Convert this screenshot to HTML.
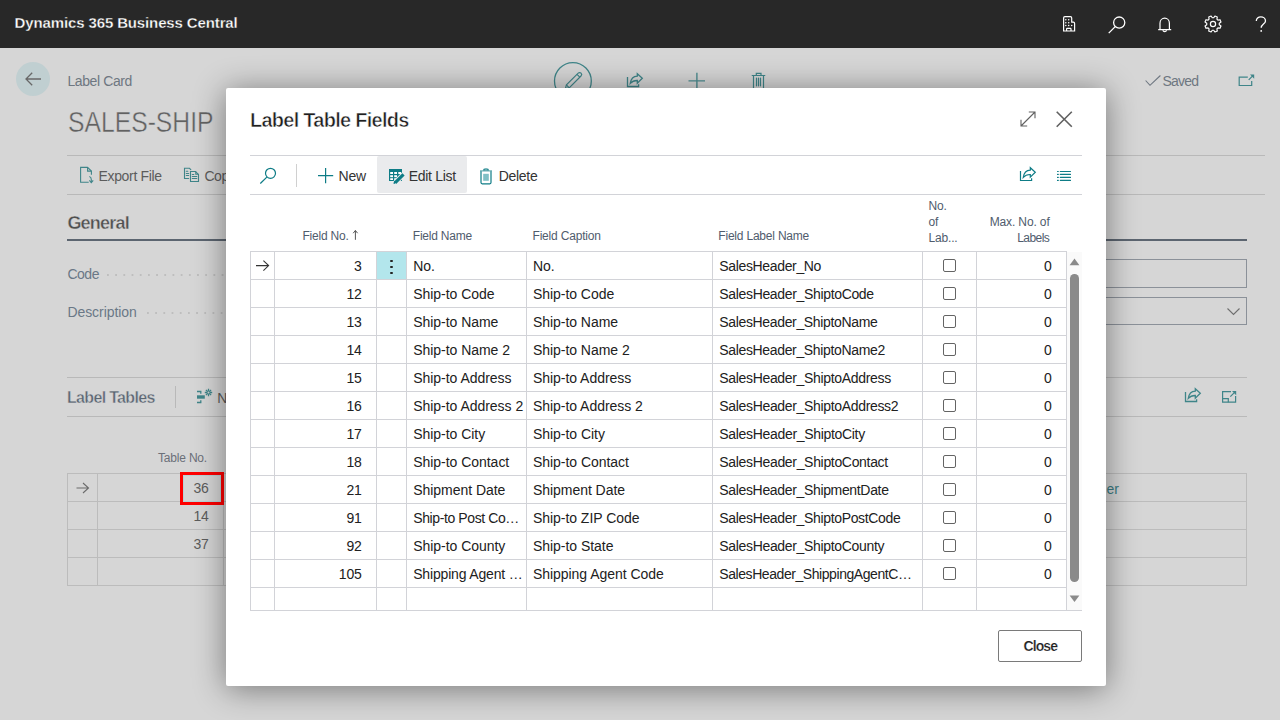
<!DOCTYPE html>
<html><head><meta charset="utf-8">
<style>
*{margin:0;padding:0;box-sizing:border-box}
html,body{width:1280px;height:720px;overflow:hidden;background:#d6d6d6;font-family:"Liberation Sans",sans-serif}
.a{position:absolute}
.t{position:absolute;white-space:nowrap;line-height:1}
svg{position:absolute;overflow:visible}
.hl{position:absolute;height:1px;background:#b9b9b9}
.ml{position:absolute;height:1px;background:#d2d3d8}
.vl{position:absolute;width:1px;background:#d2d3d8}
.cb{position:absolute;width:13px;height:13px;border:1px solid #646464;border-radius:2px}
</style></head><body>
<div class="a" style="left:0;top:0;width:1280px;height:48px;background:#282828"></div>

<svg style="left:1058px;top:12px" width="22" height="24" viewBox="0 0 22 24"><g fill="none" stroke="#fff" stroke-width="1.2"><path d="M5.6 19V5.9Q5.6 4.6 6.9 4.6H12.4Q13.7 4.6 13.7 5.9V10.1H15.4Q16.6 10.1 16.6 11.4V19Z"/><path d="M8.6 19V17Q8.6 16.4 9.2 16.4H12.4Q13 16.4 13 17V19"/></g><g fill="#fff"><circle cx="7.8" cy="7.8" r="0.75"/><circle cx="10.7" cy="7.8" r="0.75"/><circle cx="7.8" cy="10.7" r="0.75"/><circle cx="10.7" cy="10.7" r="0.75"/><circle cx="7.8" cy="13.5" r="0.75"/><circle cx="10.7" cy="13.5" r="0.75"/><circle cx="13.7" cy="13.5" r="0.75"/></g></svg>
<svg style="left:1108px;top:16px" width="18" height="18" viewBox="0 0 18 18"><g fill="none" stroke="#fff" stroke-width="1.3"><circle cx="11.2" cy="6.6" r="5.6"/><path d="M7.2 10.6L0.7 17.1"/></g></svg>
<svg style="left:1157px;top:16.7px" width="16" height="16" viewBox="0 0 16 16"><g fill="none" stroke="#fff" stroke-width="1.2"><path d="M3 12.6V6.2C3 3.4 5.1 1.2 7.7 1.2S12.4 3.4 12.4 6.2V12.6H14.2H1.2H3"/><path d="M5.8 13.2A2 2 0 0 0 9.6 13.2"/></g></svg>
<svg style="left:1203px;top:14px" width="20" height="20" viewBox="0 0 20 20"><g fill="none" stroke="#fff" stroke-width="1.2" stroke-linejoin="round"><path d="M16.26 10.71 L17.97 11.91 L16.99 14.28 L14.93 13.92 L13.92 14.93 L14.28 16.99 L11.91 17.97 L10.71 16.26 L9.29 16.26 L8.09 17.97 L5.72 16.99 L6.08 14.93 L5.07 13.92 L3.01 14.28 L2.03 11.91 L3.74 10.71 L3.74 9.29 L2.03 8.09 L3.01 5.72 L5.07 6.08 L6.08 5.07 L5.72 3.01 L8.09 2.03 L9.29 3.74 L10.71 3.74 L11.91 2.03 L14.28 3.01 L13.92 5.07 L14.93 6.08 L16.99 5.72 L17.97 8.09 L16.26 9.29Z"/><circle cx="10" cy="10" r="2.6"/></g></svg>
<svg style="left:1254.5px;top:16px" width="13" height="18" viewBox="0 0 13 18"><g fill="none" stroke="#fff" stroke-width="1.3"><path d="M1.3 5C1.3 2.6 3.3 0.9 5.8 0.9S10.5 2.6 10.5 4.9C10.5 8 6.2 8.2 6.2 11.8"/></g><circle cx="6.2" cy="14.9" r="0.9" fill="#fff"/></svg>

<!-- background page -->
<div class="hl" style="left:67px;top:155px;width:1198px"></div>
<div class="hl" style="left:67px;top:194px;width:1198px"></div>
<div class="a" style="left:67px;top:239px;width:1180px;height:2px;background:#5c6570"></div>
<div class="a" style="left:700px;top:259px;width:547px;height:29px;border:1px solid #8b9199"></div>
<div class="a" style="left:700px;top:297px;width:547px;height:28px;border:1px solid #8b9199"></div>
<div class="a" style="left:107px;top:273.5px;width:120px;height:2px;background-image:radial-gradient(circle at 1px 1px,#bebebe 0.85px,transparent 1.1px);background-size:8.2px 2px"></div>
<div class="a" style="left:147px;top:311.5px;width:80px;height:2px;background-image:radial-gradient(circle at 1px 1px,#bebebe 0.85px,transparent 1.1px);background-size:8.2px 2px"></div>
<div class="hl" style="left:67px;top:377px;width:1180px"></div>
<div class="hl" style="left:67px;top:416px;width:1180px"></div>
<div class="a" style="left:175px;top:386px;width:1px;height:22px;background:#b9b9b9"></div>
<div class="a" style="left:67px;top:473px;width:1180px;height:113px;border:1px solid #bcbcbc"></div>
<div class="hl" style="left:67px;top:501px;width:1180px;background:#bcbcbc"></div>
<div class="hl" style="left:67px;top:529px;width:1180px;background:#bcbcbc"></div>
<div class="hl" style="left:67px;top:557px;width:1180px;background:#bcbcbc"></div>
<div class="a" style="left:97px;top:473px;width:1px;height:113px;background:#bcbcbc"></div>
<div class="a" style="left:223px;top:473px;width:1px;height:113px;background:#bcbcbc"></div>
<div class="a" style="left:183px;top:475px;width:38px;height:27px;border:1px solid #b9d3d6"></div>
<svg style="left:76px;top:482px" width="14" height="12" viewBox="0 0 14 12"><path d="M0.5 6H12.5M7 1L12.5 6L7 11" fill="none" stroke="#6b6b6b" stroke-width="1.1"/></svg>

<div class="a" style="left:16px;top:62px;width:34px;height:34px;border-radius:50%;background:#c0cfd1"></div>
<svg style="left:25px;top:72px" width="16" height="14" viewBox="0 0 16 14"><path d="M1 7H16M7.2 0.8L1 7L7.2 13.2" fill="none" stroke="#686868" stroke-width="1.3"/></svg>
<svg style="left:554px;top:61px" width="40" height="40" viewBox="0 0 40 40"><circle cx="18.9" cy="20" r="18.4" fill="none" stroke="#3f8589" stroke-width="1.3"/><g fill="none" stroke="#3f8589" stroke-width="1.2" stroke-linejoin="round"><path d="M27 15L15.2 26.8L11.4 27.7L12.4 23.9L24.2 12.1A2 2 0 0 1 27 15Z"/><path d="M23 13.3L25.8 16.1M12.4 23.9L15.2 26.8"/></g></svg>
<svg style="left:623px;top:68px" width="24" height="24" viewBox="0 0 24 24"><g fill="none" stroke="#3f8589" stroke-width="1.3" stroke-linejoin="miter"><path d="M4.5 9V18.5H15.6V16.3"/><path d="M7.3 15.3C7.9 11 10.6 8.3 14.3 8.1V5.7L19.3 10.3L14.3 15.1V12.5C11.6 12.4 9.2 13.2 7.3 15.3Z"/></g></svg>
<svg style="left:688px;top:72px" width="17" height="18" viewBox="0 0 17 18"><path d="M8.9 0.8V18M0.5 8.9H17" fill="none" stroke="#3f8589" stroke-width="1.4" opacity=".9"/></svg>
<svg style="left:744px;top:64px" width="28" height="28" viewBox="0 0 28 28"><g fill="none" stroke="#3f8589" stroke-width="1.2" stroke-linecap="round"><path d="M8.2 11.5H20.8M12.3 11.3V9.3H17V11.3M9.5 11.7V27M19.5 11.7V27M12.5 14V21.8M14.5 14V21.8M16.5 14V21.8"/></g></svg>
<svg style="left:1145px;top:75px" width="16" height="11" viewBox="0 0 16 11"><path d="M0.6 5.5L5 10.3L15.4 0.5" fill="none" stroke="#6e7781" stroke-width="1.1"/></svg>
<svg style="left:1238px;top:73px" width="18" height="14" viewBox="0 0 18 14"><g fill="none" stroke="#3f8589" stroke-width="1.2"><path d="M9.8 4.1H1.2V12.5H13.7V8.1"/><path d="M10.7 6.9L15.2 2.4"/></g><path d="M12 1.5H16.2V5.7Z" fill="#3f8589"/></svg>
<svg style="left:76px;top:164px" width="24" height="24" viewBox="0 0 24 24"><g fill="none" stroke="#3f8589" stroke-width="1.1"><path d="M12.7 18.3H4.6V3.4H11.5L15.4 7.1V10.8"/><path d="M11.6 3.6V7.1H15.2"/><path d="M13.3 12.5Q15.3 13 15.3 15.5V18.3"/><path d="M13.4 16.3L15.3 18.6L17.2 16.3"/></g></svg>
<svg style="left:180px;top:164px" width="24" height="24" viewBox="0 0 24 24"><g fill="none" stroke="#3f8589" stroke-width="1.1" stroke-linecap="round"><path d="M8.7 14.5H4.5V4.3H9.5L10.8 5.6"/><path d="M6.3 7.3H7.8M6.3 9.5H8.7M6.3 11.5H8.7"/><path d="M10.5 7.5H15.5L18.5 10.5V17.5H10.5Z"/><path d="M15.8 7.8V10.2H18.2"/><path d="M12.3 10.5H13.8M12.3 12.5H16.8M12.3 14.5H16.8"/></g></svg>
<svg style="left:192px;top:384px" width="24" height="24" viewBox="0 0 24 24"><g fill="none" stroke="#3f8589" stroke-width="1.3"><path d="M5 7.5H8.8V9.8M8.8 16.2V18.5H5"/><path d="M12.8 8.5H20.2M16.5 4.8V12.2M13.9 5.9L19.1 11.1M19.1 5.9L13.9 11.1"/></g><rect x="5" y="11.3" width="7.8" height="3.4" fill="#3f8589"/><circle cx="16.5" cy="8.5" r="1" fill="#d0d0d0"/></svg>
<svg style="left:1227px;top:304px" width="14" height="14" viewBox="0 0 14 14"><path d="M0.5 4.5L6.5 10.5L12.5 4.5" fill="none" stroke="#6e6e6e" stroke-width="1.1"/></svg>
<svg style="left:1181px;top:383px" width="24" height="24" viewBox="0 0 24 24"><g fill="none" stroke="#3f8589" stroke-width="1.3" stroke-linejoin="miter"><path d="M4.5 9V18.5H15.6V16.3"/><path d="M7.3 15.3C7.9 11 10.6 8.3 14.3 8.1V5.7L19.3 10.3L14.3 15.1V12.5C11.6 12.4 9.2 13.2 7.3 15.3Z"/></g></svg>
<svg style="left:1216px;top:384px" width="24" height="24" viewBox="0 0 24 24"><g fill="none" stroke="#3f8589" stroke-width="1.2"><path d="M15 7.6H6.6V18.2H19.6V12"/><path d="M6.6 14.6H12.3V18.2"/><path d="M14.3 12.6L18.6 8.3"/></g><path d="M16 7H20.2V11.2Z" fill="#3f8589"/></svg>

<div class="t" style="top:15.00px;font-size:15px;color:#ffffff;font-weight:700;letter-spacing:-0.130px;left:14.60px;-webkit-text-stroke:0.3px #282828;">Dynamics 365 Business Central</div>
<div class="t" style="top:74.05px;font-size:14px;color:#6e7781;letter-spacing:-0.390px;left:67.40px;">Label Card</div>
<div class="t" style="top:106.83px;font-size:29.5px;color:#626262;left:68.20px;transform:scaleX(0.8372);transform-origin:0 0;-webkit-text-stroke:0.45px #d6d6d6;">SALES-SHIP</div>
<div class="t" style="top:168.75px;font-size:14px;color:#5c5c5c;letter-spacing:-0.334px;left:98.50px;">Export File</div>
<div class="t" style="top:168.75px;font-size:14px;color:#5c5c5c;letter-spacing:-0.449px;left:204.40px;">Copy</div>
<div class="t" style="top:213.56px;font-size:18px;color:#505050;font-weight:700;letter-spacing:-0.778px;left:67.40px;-webkit-text-stroke:0.4px #d6d6d6;">General</div>
<div class="t" style="top:266.95px;font-size:14px;color:#6a7886;letter-spacing:-0.467px;left:67.40px;">Code</div>
<div class="t" style="top:304.85px;font-size:14px;color:#6a7886;letter-spacing:-0.057px;left:67.40px;">Description</div>
<div class="t" style="top:390.26px;font-size:16px;color:#5b6673;font-weight:700;letter-spacing:-0.678px;left:67.00px;-webkit-text-stroke:0.4px #d6d6d6;">Label Tables</div>
<div class="t" style="top:391.15px;font-size:14px;color:#5c5c5c;letter-spacing:-0.187px;left:217.30px;">New</div>
<div class="t" style="top:451.54px;font-size:12px;color:#6b7079;letter-spacing:-0.189px;left:158.00px;">Table No.</div>
<div class="t" style="top:481.15px;font-size:14px;color:#5c5c5c;letter-spacing:-0.312px;right:1071.56px;">36</div>
<div class="t" style="top:509.15px;font-size:14px;color:#5c5c5c;letter-spacing:-0.312px;right:1071.56px;">14</div>
<div class="t" style="top:537.15px;font-size:14px;color:#5c5c5c;letter-spacing:-0.312px;right:1071.56px;">37</div>
<div class="t" style="top:481.65px;font-size:14px;color:#3b7c83;letter-spacing:0.073px;right:161.03px;">er</div>
<div class="t" style="top:74.15px;font-size:14px;color:#6e7781;letter-spacing:-0.781px;left:1162.50px;">Saved</div>
<div class="a" style="left:180px;top:472px;width:44px;height:33px;border:3px solid #ff0000"></div>
<!-- modal -->
<div class="a" style="left:226px;top:88px;width:880px;height:598px;background:#fff;border-radius:2px;box-shadow:0 3px 32px rgba(0,0,0,.45)"></div>
<div class="ml" style="left:250px;top:155px;width:832px"></div>
<div class="ml" style="left:250px;top:194px;width:832px"></div>
<div class="a" style="left:377px;top:156px;width:90px;height:37px;background:#eaebed;border-radius:2px"></div>
<div class="vl" style="left:296px;top:164px;height:23px;background:#d0d0d0"></div>
<div class="a" style="left:250px;top:251px;width:817px;height:360px;border:1px solid #d2d3d8;border-right:none"></div>
<div class="ml" style="left:250px;top:279px;width:816px"></div>
<div class="ml" style="left:250px;top:307px;width:816px"></div>
<div class="ml" style="left:250px;top:335px;width:816px"></div>
<div class="ml" style="left:250px;top:363px;width:816px"></div>
<div class="ml" style="left:250px;top:391px;width:816px"></div>
<div class="ml" style="left:250px;top:419px;width:816px"></div>
<div class="ml" style="left:250px;top:447px;width:816px"></div>
<div class="ml" style="left:250px;top:475px;width:816px"></div>
<div class="ml" style="left:250px;top:503px;width:816px"></div>
<div class="ml" style="left:250px;top:531px;width:816px"></div>
<div class="ml" style="left:250px;top:559px;width:816px"></div>
<div class="ml" style="left:250px;top:587px;width:816px"></div>
<div class="vl" style="left:274px;top:251px;height:359px"></div>
<div class="vl" style="left:376px;top:251px;height:359px"></div>
<div class="vl" style="left:406px;top:251px;height:359px"></div>
<div class="vl" style="left:526px;top:251px;height:359px"></div>
<div class="vl" style="left:712px;top:251px;height:359px"></div>
<div class="vl" style="left:922px;top:251px;height:359px"></div>
<div class="vl" style="left:976px;top:251px;height:359px"></div>
<div class="vl" style="left:1066px;top:251px;height:359px"></div>
<div class="a" style="left:1067px;top:252px;width:15px;height:358px;background:#fafafa"></div>
<div class="ml" style="left:1066px;top:610px;width:16px"></div>
<div class="a" style="left:377px;top:252px;width:29px;height:27px;background:#b3e6ec"></div>
<div class="cb" style="left:943px;top:259px"></div>
<div class="cb" style="left:943px;top:287px"></div>
<div class="cb" style="left:943px;top:315px"></div>
<div class="cb" style="left:943px;top:343px"></div>
<div class="cb" style="left:943px;top:371px"></div>
<div class="cb" style="left:943px;top:399px"></div>
<div class="cb" style="left:943px;top:427px"></div>
<div class="cb" style="left:943px;top:455px"></div>
<div class="cb" style="left:943px;top:483px"></div>
<div class="cb" style="left:943px;top:511px"></div>
<div class="cb" style="left:943px;top:539px"></div>
<div class="cb" style="left:943px;top:567px"></div>

<svg style="left:1020px;top:111px" width="16" height="16" viewBox="0 0 16 16"><g fill="none" stroke="#616161" stroke-width="1.1"><path d="M1 15L15 1M8.8 1H15V7.2M1 8.8V15H7.2"/></g></svg>
<svg style="left:1056px;top:111px" width="17" height="17" viewBox="0 0 17 17"><path d="M0.7 0.7L15.8 15.8M15.8 0.7L0.7 15.8" fill="none" stroke="#616161" stroke-width="1.6"/></svg>
<svg style="left:256px;top:164px" width="26" height="24" viewBox="0 0 26 24"><g fill="none" stroke="#0e7c86" stroke-width="1.2"><circle cx="14.5" cy="9.3" r="5.0"/><path d="M10.8 13.1L4.3 19.5"/></g></svg>
<svg style="left:318px;top:168px" width="16" height="16" viewBox="0 0 16 16"><path d="M7.6 0V15.2M0 7.6H15.2" fill="none" stroke="#0e7c86" stroke-width="1.2"/></svg>
<svg style="left:384px;top:164px" width="26" height="24" viewBox="0 0 26 24"><path d="M5 5H18V17H5Z" fill="#0e7c86"/><g fill="#fff"><rect x="6.2" y="8" width="2.8" height="2"/><rect x="10.2" y="8" width="2.8" height="2"/><rect x="14.3" y="8" width="2.7" height="2"/><rect x="6.2" y="11.2" width="2.8" height="2"/><rect x="10.2" y="11.2" width="2.8" height="2"/><rect x="6.2" y="14.2" width="2.8" height="1.8"/><rect x="10.2" y="14.2" width="2.8" height="1.8"/></g><path d="M11.5 18.3L19.8 10" stroke="#eaebed" stroke-width="5.2"/><path d="M11 18.8L19.5 10.3" stroke="#0e7c86" stroke-width="3.2"/><path d="M10 19.8L11.2 17" stroke="#0e7c86" stroke-width="1.5"/></svg>
<svg style="left:476px;top:164px" width="22" height="24" viewBox="0 0 22 24"><path d="M5 7.2V18.6Q5 19.8 6.2 19.8H13.8Q15 19.8 15 18.6V7.2" fill="none" stroke="#0e7c86" stroke-width="1.2"/><path d="M4 6.9H16" stroke="#0e7c86" stroke-width="1.1" opacity=".7"/><path d="M7 6.6Q7 4.2 10 4.2Q13 4.2 13 6.6Z" fill="#0e7c86" opacity=".85"/><path d="M10 4.5V6.5" stroke="#9cc9cc" stroke-width="0.9"/><rect x="7.2" y="9.8" width="5.6" height="7" fill="#7fbfc5"/></svg>
<svg style="left:1016px;top:162px" width="24" height="24" viewBox="0 0 24 24"><g fill="none" stroke="#0e7c86" stroke-width="1.2" stroke-linejoin="miter"><path d="M4.5 9V18.5H15.6V16.3"/><path d="M7.3 15.3C7.9 11 10.6 8.3 14.3 8.1V5.7L19.3 10.3L14.3 15.1V12.5C11.6 12.4 9.2 13.2 7.3 15.3Z"/></g></svg>
<svg style="left:1056px;top:170px" width="16" height="12" viewBox="0 0 16 12"><g stroke="#0e7c86" stroke-width="1.1" stroke-linecap="round"><path d="M1.5 1.5H2.3M4.3 1.5H14.5M1.5 4.4H2.3M4.3 4.4H14.5M1.5 7.4H2.3M4.3 7.4H14.5M1.5 10.4H2.3M4.3 10.4H14.5"/></g></svg>
<svg style="left:352px;top:229px" width="8" height="12" viewBox="0 0 8 12"><path d="M3.4 1.5V10.8M1.2 4.2L3.4 1.5L5.6 4.2" fill="none" stroke="#555" stroke-width="1"/></svg>
<svg style="left:256px;top:260px" width="14" height="12" viewBox="0 0 14 12"><path d="M0 5.6H12.8M7.4 0.6L12.6 5.6L7.4 10.6" fill="none" stroke="#333" stroke-width="1.1"/></svg>
<div class="a" style="left:390.3px;top:259.8px;width:2.4px;height:2.4px;border-radius:50%;background:#222"></div>
<div class="a" style="left:390.3px;top:265.7px;width:2.4px;height:2.4px;border-radius:50%;background:#222"></div>
<div class="a" style="left:390.3px;top:271.6px;width:2.4px;height:2.4px;border-radius:50%;background:#222"></div>
<svg style="left:1069px;top:258px" width="11" height="8" viewBox="0 0 11 8"><path d="M5.5 0.6L10.4 7.2H0.6Z" fill="#8a8a8a"/></svg>
<svg style="left:1069px;top:595px" width="11" height="8" viewBox="0 0 11 8"><path d="M5.5 7L10.4 0.6H0.6Z" fill="#8a8a8a"/></svg>
<div class="a" style="left:1070.3px;top:273.5px;width:8.7px;height:308.5px;border-radius:4.4px;background:#8a8a8a"></div>

<div class="t" style="top:110.07px;font-size:20px;color:#1f1f1f;font-weight:700;letter-spacing:-0.739px;left:250.00px;-webkit-text-stroke:0.55px #fff;">Label Table Fields</div>
<div class="t" style="top:169.15px;font-size:14px;color:#333333;letter-spacing:-0.172px;left:338.50px;">New</div>
<div class="t" style="top:168.85px;font-size:14px;color:#333333;letter-spacing:-0.301px;left:408.70px;">Edit List</div>
<div class="t" style="top:169.15px;font-size:14px;color:#333333;letter-spacing:-0.295px;left:498.70px;">Delete</div>
<div class="t" style="top:229.64px;font-size:12px;color:#505c6d;letter-spacing:-0.226px;right:931.53px;">Field No.</div>
<div class="t" style="top:229.54px;font-size:12px;color:#505c6d;letter-spacing:-0.215px;left:412.80px;">Field Name</div>
<div class="t" style="top:229.54px;font-size:12px;color:#505c6d;letter-spacing:-0.190px;left:532.50px;">Field Caption</div>
<div class="t" style="top:229.74px;font-size:12px;color:#505c6d;letter-spacing:-0.204px;left:718.30px;">Field Label Name</div>
<div class="t" style="top:199.59px;font-size:12px;color:#505c6d;letter-spacing:-0.218px;left:928.50px;">No.</div>
<div class="t" style="top:215.54px;font-size:12px;color:#505c6d;letter-spacing:-0.175px;left:928.50px;">of</div>
<div class="t" style="top:231.74px;font-size:12px;color:#505c6d;letter-spacing:-0.175px;left:928.50px;">Lab...</div>
<div class="t" style="top:215.54px;font-size:12px;color:#505c6d;letter-spacing:-0.124px;right:230.37px;">Max. No. of</div>
<div class="t" style="top:231.74px;font-size:12px;color:#505c6d;letter-spacing:-0.562px;right:230.81px;">Labels</div>
<div class="t" style="top:258.65px;font-size:14px;color:#212121;letter-spacing:-0.234px;right:918.48px;">3</div>
<div class="t" style="top:258.65px;font-size:14px;color:#212121;letter-spacing:-0.036px;left:413.20px;">No.</div>
<div class="t" style="top:258.65px;font-size:14px;color:#212121;letter-spacing:-0.036px;left:532.90px;">No.</div>
<div class="t" style="top:258.65px;font-size:14px;color:#212121;letter-spacing:-0.350px;left:719.30px;">SalesHeader_No</div>
<div class="t" style="top:258.65px;font-size:14px;color:#212121;letter-spacing:-0.234px;right:228.33px;">0</div>
<div class="t" style="top:286.65px;font-size:14px;color:#212121;letter-spacing:-0.234px;right:918.48px;">12</div>
<div class="t" style="top:286.65px;font-size:14px;color:#212121;letter-spacing:-0.034px;left:413.20px;">Ship-to Code</div>
<div class="t" style="top:286.65px;font-size:14px;color:#212121;letter-spacing:-0.034px;left:532.90px;">Ship-to Code</div>
<div class="t" style="top:286.65px;font-size:14px;color:#212121;letter-spacing:-0.338px;left:719.30px;">SalesHeader_ShiptoCode</div>
<div class="t" style="top:286.65px;font-size:14px;color:#212121;letter-spacing:-0.234px;right:228.33px;">0</div>
<div class="t" style="top:314.65px;font-size:14px;color:#212121;letter-spacing:-0.234px;right:918.48px;">13</div>
<div class="t" style="top:314.65px;font-size:14px;color:#212121;letter-spacing:-0.036px;left:413.20px;">Ship-to Name</div>
<div class="t" style="top:314.65px;font-size:14px;color:#212121;letter-spacing:-0.036px;left:532.90px;">Ship-to Name</div>
<div class="t" style="top:314.65px;font-size:14px;color:#212121;letter-spacing:-0.347px;left:719.30px;">SalesHeader_ShiptoName</div>
<div class="t" style="top:314.65px;font-size:14px;color:#212121;letter-spacing:-0.234px;right:228.33px;">0</div>
<div class="t" style="top:342.65px;font-size:14px;color:#212121;letter-spacing:-0.234px;right:918.48px;">14</div>
<div class="t" style="top:342.65px;font-size:14px;color:#212121;letter-spacing:-0.035px;left:413.20px;">Ship-to Name 2</div>
<div class="t" style="top:342.65px;font-size:14px;color:#212121;letter-spacing:-0.035px;left:532.90px;">Ship-to Name 2</div>
<div class="t" style="top:342.65px;font-size:14px;color:#212121;letter-spacing:-0.347px;left:719.30px;">SalesHeader_ShiptoName2</div>
<div class="t" style="top:342.65px;font-size:14px;color:#212121;letter-spacing:-0.234px;right:228.33px;">0</div>
<div class="t" style="top:370.65px;font-size:14px;color:#212121;letter-spacing:-0.234px;right:918.48px;">15</div>
<div class="t" style="top:370.65px;font-size:14px;color:#212121;letter-spacing:-0.033px;left:413.20px;">Ship-to Address</div>
<div class="t" style="top:370.65px;font-size:14px;color:#212121;letter-spacing:-0.033px;left:532.90px;">Ship-to Address</div>
<div class="t" style="top:370.65px;font-size:14px;color:#212121;letter-spacing:-0.331px;left:719.30px;">SalesHeader_ShiptoAddress</div>
<div class="t" style="top:370.65px;font-size:14px;color:#212121;letter-spacing:-0.234px;right:228.33px;">0</div>
<div class="t" style="top:398.65px;font-size:14px;color:#212121;letter-spacing:-0.234px;right:918.48px;">16</div>
<div class="t" style="top:398.65px;font-size:14px;color:#212121;letter-spacing:-0.033px;left:413.20px;">Ship-to Address 2</div>
<div class="t" style="top:398.65px;font-size:14px;color:#212121;letter-spacing:-0.033px;left:532.90px;">Ship-to Address 2</div>
<div class="t" style="top:398.65px;font-size:14px;color:#212121;letter-spacing:-0.332px;left:719.30px;">SalesHeader_ShiptoAddress2</div>
<div class="t" style="top:398.65px;font-size:14px;color:#212121;letter-spacing:-0.234px;right:228.33px;">0</div>
<div class="t" style="top:426.65px;font-size:14px;color:#212121;letter-spacing:-0.234px;right:918.48px;">17</div>
<div class="t" style="top:426.65px;font-size:14px;color:#212121;letter-spacing:-0.030px;left:413.20px;">Ship-to City</div>
<div class="t" style="top:426.65px;font-size:14px;color:#212121;letter-spacing:-0.030px;left:532.90px;">Ship-to City</div>
<div class="t" style="top:426.65px;font-size:14px;color:#212121;letter-spacing:-0.319px;left:719.30px;">SalesHeader_ShiptoCity</div>
<div class="t" style="top:426.65px;font-size:14px;color:#212121;letter-spacing:-0.234px;right:228.33px;">0</div>
<div class="t" style="top:454.65px;font-size:14px;color:#212121;letter-spacing:-0.234px;right:918.48px;">18</div>
<div class="t" style="top:454.65px;font-size:14px;color:#212121;letter-spacing:-0.032px;left:413.20px;">Ship-to Contact</div>
<div class="t" style="top:454.65px;font-size:14px;color:#212121;letter-spacing:-0.032px;left:532.90px;">Ship-to Contact</div>
<div class="t" style="top:454.65px;font-size:14px;color:#212121;letter-spacing:-0.325px;left:719.30px;">SalesHeader_ShiptoContact</div>
<div class="t" style="top:454.65px;font-size:14px;color:#212121;letter-spacing:-0.234px;right:228.33px;">0</div>
<div class="t" style="top:482.65px;font-size:14px;color:#212121;letter-spacing:-0.234px;right:918.48px;">21</div>
<div class="t" style="top:482.65px;font-size:14px;color:#212121;letter-spacing:-0.036px;left:413.20px;">Shipment Date</div>
<div class="t" style="top:482.65px;font-size:14px;color:#212121;letter-spacing:-0.036px;left:532.90px;">Shipment Date</div>
<div class="t" style="top:482.65px;font-size:14px;color:#212121;letter-spacing:-0.340px;left:719.30px;">SalesHeader_ShipmentDate</div>
<div class="t" style="top:482.65px;font-size:14px;color:#212121;letter-spacing:-0.234px;right:228.33px;">0</div>
<div class="t" style="top:510.65px;font-size:14px;color:#212121;letter-spacing:-0.234px;right:918.48px;">91</div>
<div class="t" style="top:510.65px;font-size:14px;color:#212121;letter-spacing:-0.391px;left:413.20px;">Ship-to Post Co&#8230;</div>
<div class="t" style="top:510.65px;font-size:14px;color:#212121;letter-spacing:-0.033px;left:532.90px;">Ship-to ZIP Code</div>
<div class="t" style="top:510.65px;font-size:14px;color:#212121;letter-spacing:-0.336px;left:719.30px;">SalesHeader_ShiptoPostCode</div>
<div class="t" style="top:510.65px;font-size:14px;color:#212121;letter-spacing:-0.234px;right:228.33px;">0</div>
<div class="t" style="top:538.65px;font-size:14px;color:#212121;letter-spacing:-0.234px;right:918.48px;">92</div>
<div class="t" style="top:538.65px;font-size:14px;color:#212121;letter-spacing:-0.033px;left:413.20px;">Ship-to County</div>
<div class="t" style="top:538.65px;font-size:14px;color:#212121;letter-spacing:-0.031px;left:532.90px;">Ship-to State</div>
<div class="t" style="top:538.65px;font-size:14px;color:#212121;letter-spacing:-0.331px;left:719.30px;">SalesHeader_ShiptoCounty</div>
<div class="t" style="top:538.65px;font-size:14px;color:#212121;letter-spacing:-0.234px;right:228.33px;">0</div>
<div class="t" style="top:566.65px;font-size:14px;color:#212121;letter-spacing:-0.234px;right:918.48px;">105</div>
<div class="t" style="top:566.65px;font-size:14px;color:#212121;letter-spacing:-0.168px;left:413.20px;">Shipping Agent &#8230;</div>
<div class="t" style="top:566.65px;font-size:14px;color:#212121;letter-spacing:-0.035px;left:532.90px;">Shipping Agent Code</div>
<div class="t" style="top:566.65px;font-size:14px;color:#212121;letter-spacing:-0.434px;left:719.30px;">SalesHeader_ShippingAgentC&#8230;</div>
<div class="t" style="top:566.65px;font-size:14px;color:#212121;letter-spacing:-0.234px;right:228.33px;">0</div>
<div class="t" style="top:639.05px;font-size:14px;color:#212121;font-weight:700;letter-spacing:-0.945px;left:1023.60px;-webkit-text-stroke:0.2px #fff;">Close</div>
<div class="a" style="left:998px;top:630px;width:84px;height:32px;border:1px solid #7a7a7a;border-radius:2px"></div>
</body></html>
